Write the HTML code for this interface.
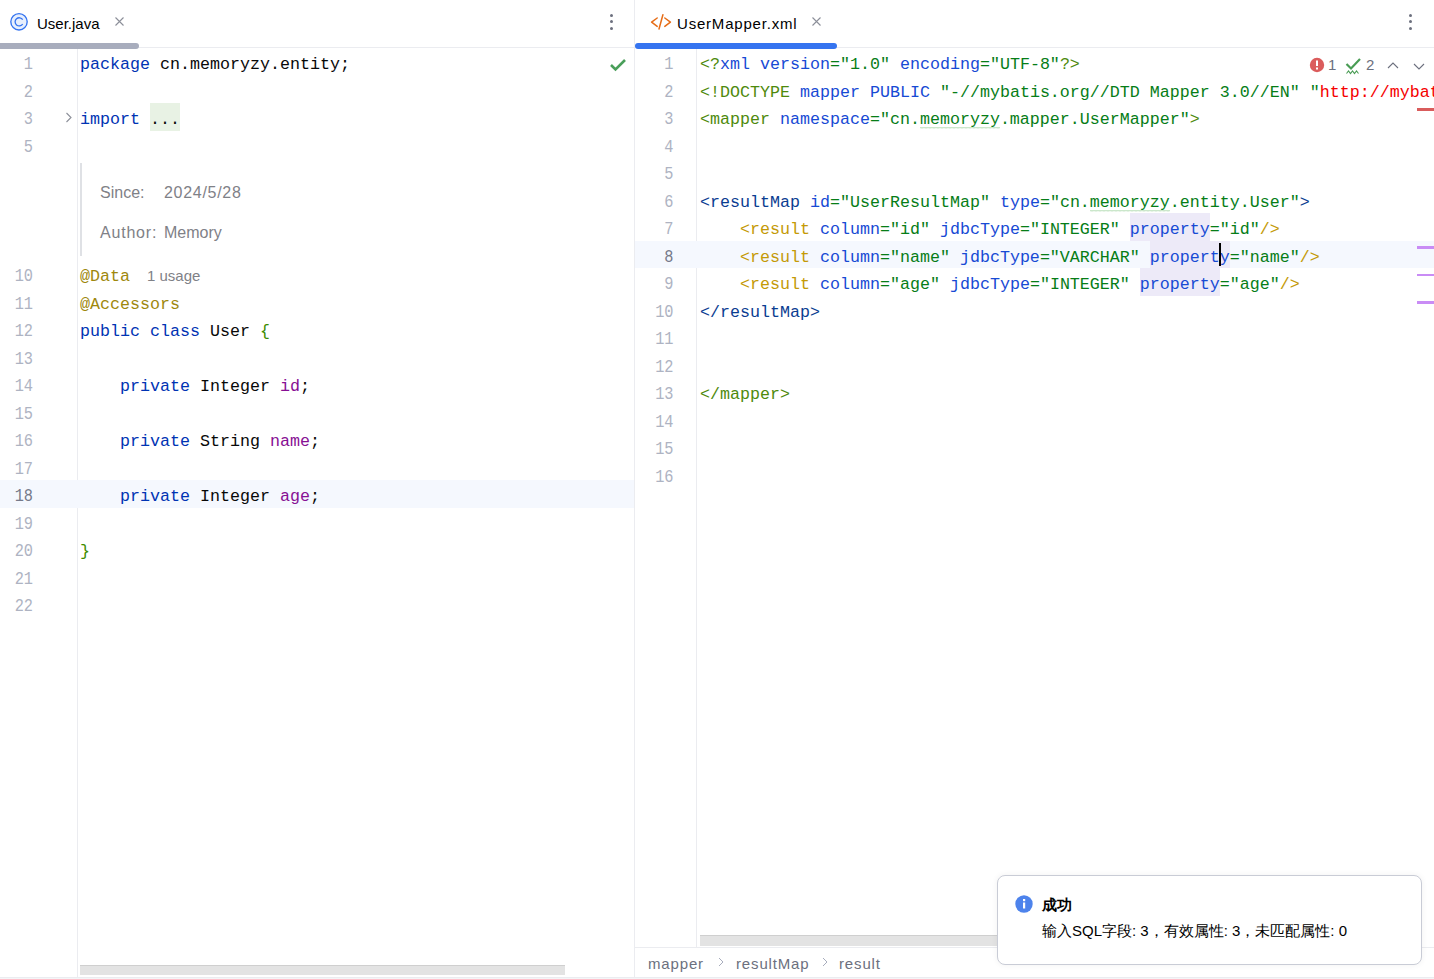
<!DOCTYPE html>
<html><head><meta charset="utf-8">
<style>
*{box-sizing:border-box}
html,body{margin:0;padding:0}
body{width:1434px;height:979px;overflow:hidden;background:#fff;position:relative;font-family:"Liberation Sans",sans-serif;color:#000}
.a{position:absolute}
.ln{position:absolute;letter-spacing:0;transform:scaleX(0.85);transform-origin:100% 50%;font-family:"Liberation Mono",monospace;font-size:18px;line-height:27.5px;height:27.5px;color:#aeb3c2;text-align:right;white-space:pre}
.cl{position:absolute;font-family:"Liberation Mono",monospace;font-size:16.6667px;line-height:27.5px;height:27.5px;color:#080808;white-space:pre}
.kw{color:#0033b3}
.fd{color:#871094}
.an{color:#9e880d}
.br{color:#3d8c00}
.st{color:#067d17}
.at{color:#174ad4}
.t1{color:#4e8a0c}
.t2{color:#0b3d91}
.t3{color:#c49a06}
.rd{color:#f50000}
#L,#R{position:absolute;left:0;top:3px}
.tabtxt{position:absolute;font-size:15px;line-height:17px;color:#000;white-space:pre}
</style></head><body>

<!-- ===== LEFT PANE ===== -->
<div class="a" style="left:0;top:47px;width:634px;height:1px;background:#ebecf0"></div>
<div class="a" style="left:0;top:43px;width:139px;height:6px;background:#a8adbd;border-radius:0 3px 3px 0"></div>
<!-- class icon -->
<svg class="a" style="left:9px;top:12px" width="20" height="20" viewBox="0 0 20 20">
  <circle cx="10" cy="9.8" r="8.2" fill="#e7effd" stroke="#3574f0" stroke-width="1.35"/>
  <path d="M13.7 7.7 A4.1 4.1 0 1 0 13.7 12" fill="none" stroke="#3574f0" stroke-width="1.3"/>
</svg>
<div class="tabtxt" style="left:37px;top:15px">User.java</div>
<svg class="a" style="left:114px;top:16px" width="11" height="11" viewBox="0 0 11 11"><path d="M1.5 1.5L9.5 9.5M9.5 1.5L1.5 9.5" stroke="#8c8f99" stroke-width="1.1"/></svg>
<!-- kebab -->
<div class="a" style="left:610px;top:14px;width:3px;height:3px;border-radius:50%;background:#6c707e"></div>
<div class="a" style="left:610px;top:20px;width:3px;height:3px;border-radius:50%;background:#6c707e"></div>
<div class="a" style="left:610px;top:27px;width:3px;height:3px;border-radius:50%;background:#6c707e"></div>
<!-- check -->
<svg class="a" style="left:609px;top:58px" width="18" height="14" viewBox="0 0 18 14"><path d="M2 7 L6.5 11.5 L16 2" fill="none" stroke="#4a9f5a" stroke-width="2.6"/></svg>

<!-- gutter border left -->
<div class="a" style="left:77px;top:49px;width:1px;height:928px;background:#ebecf0"></div>
<!-- current line 18 -->
<div class="a" style="left:0;top:480px;width:634px;height:27.5px;background:#f5f8fe"></div>

<div class="a" style="left:150px;top:103px;width:30px;height:27.5px;background:#e8f2e4"></div>
<svg class="a" style="left:64px;top:111px" width="10" height="13" viewBox="0 0 10 13"><path d="M2.5 2 L7 6.5 L2.5 11" fill="none" stroke="#8c8f99" stroke-width="1.1"/></svg>
<div id="L">
<div class="ln" style="left:0;width:33px;top:48px">1</div>
<div class="ln" style="left:0;width:33px;top:75.5px">2</div>
<div class="ln" style="left:0;width:33px;top:103px">3</div>
<div class="ln" style="left:0;width:33px;top:130.5px">5</div>
<div class="ln" style="left:0;width:33px;top:260px">10</div>
<div class="ln" style="left:0;width:33px;top:287.5px">11</div>
<div class="ln" style="left:0;width:33px;top:315px">12</div>
<div class="ln" style="left:0;width:33px;top:342.5px">13</div>
<div class="ln" style="left:0;width:33px;top:370px">14</div>
<div class="ln" style="left:0;width:33px;top:397.5px">15</div>
<div class="ln" style="left:0;width:33px;top:425px">16</div>
<div class="ln" style="left:0;width:33px;top:452.5px">17</div>
<div class="ln" style="left:0;width:33px;top:480px;color:#767a8a">18</div>
<div class="ln" style="left:0;width:33px;top:507.5px">19</div>
<div class="ln" style="left:0;width:33px;top:535px">20</div>
<div class="ln" style="left:0;width:33px;top:562.5px">21</div>
<div class="ln" style="left:0;width:33px;top:590px">22</div>


<div class="cl" style="left:80px;top:48px"><span class="kw">package</span> cn.memoryzy.entity;</div>
<div class="cl" style="left:80px;top:103px"><span class="kw">import</span> ...</div>
<div class="cl" style="left:80px;top:260px"><span class="an">@Data</span></div>
<div class="cl" style="left:80px;top:287.5px"><span class="an">@Accessors</span></div>
<div class="cl" style="left:80px;top:315px"><span class="kw">public class</span> User <span class="br">{</span></div>
<div class="cl" style="left:80px;top:370px">    <span class="kw">private</span> Integer <span class="fd">id</span>;</div>
<div class="cl" style="left:80px;top:425px">    <span class="kw">private</span> String <span class="fd">name</span>;</div>
<div class="cl" style="left:80px;top:480px">    <span class="kw">private</span> Integer <span class="fd">age</span>;</div>
<div class="cl" style="left:80px;top:535px"><span class="br">}</span></div>
</div>

<!-- doc block -->
<div class="a" style="left:80px;top:163px;width:2px;height:93px;background:#dfe1e5"></div>
<div class="a" style="left:100px;top:182.5px;font-size:16px;line-height:19px;color:#7f8187;white-space:pre">Since:</div>
<div class="a" style="left:164px;top:182.5px;letter-spacing:0.7px;font-size:16px;line-height:19px;color:#7f8187;white-space:pre">2024/5/28</div>
<div class="a" style="left:100px;top:222.5px;letter-spacing:0.8px;font-size:16px;line-height:19px;color:#7f8187;white-space:pre">Author:</div>
<div class="a" style="left:164px;top:222.5px;font-size:16px;line-height:19px;color:#7f8187;white-space:pre">Memory</div>
<div class="a" style="left:147px;top:267px;font-size:15px;line-height:17px;color:#7f8187;white-space:pre">1 usage</div>

<!-- left scrollbar -->
<div class="a" style="left:80px;top:965px;width:485px;height:10px;background:#e3e3e3;border-top:1px solid #cfcfcf"></div>

<!-- ===== DIVIDER ===== -->
<div class="a" style="left:634px;top:0;width:1px;height:979px;background:#ebecf0"></div>

<!-- ===== RIGHT PANE ===== -->
<div class="a" style="left:635px;top:47px;width:799px;height:1px;background:#ebecf0"></div>
<div class="a" style="left:635px;top:43px;width:202px;height:6px;background:#3574f0;border-radius:3px"></div>
<svg class="a" style="left:650px;top:13px" width="22" height="18" viewBox="0 0 22 18">
  <path d="M7.2 5 L1.6 9.2 L7.2 13.4 M14.8 5 L20.4 9.2 L14.8 13.4 M12.9 1.8 L9 16" fill="none" stroke="#e66d17" stroke-width="1.5" stroke-linecap="round" stroke-linejoin="round"/>
</svg>
<div class="tabtxt" style="left:677px;top:15px;letter-spacing:0.8px">UserMapper.xml</div>
<svg class="a" style="left:811px;top:16px" width="11" height="11" viewBox="0 0 11 11"><path d="M1.5 1.5L9.5 9.5M9.5 1.5L1.5 9.5" stroke="#8c8f99" stroke-width="1.1"/></svg>
<div class="a" style="left:1409px;top:14px;width:3px;height:3px;border-radius:50%;background:#6c707e"></div>
<div class="a" style="left:1409px;top:20px;width:3px;height:3px;border-radius:50%;background:#6c707e"></div>
<div class="a" style="left:1409px;top:27px;width:3px;height:3px;border-radius:50%;background:#6c707e"></div>

<div class="a" style="left:696px;top:49px;width:1px;height:898px;background:#ebecf0"></div>
<div class="a" style="left:635px;top:240.5px;width:799px;height:27.5px;background:#f5f8fe"></div>

<!-- property highlights -->
<div class="a" style="left:1130px;top:213px;width:80px;height:27.5px;background:#edeaf8"></div>
<div class="a" style="left:1150px;top:240.5px;width:80px;height:27.5px;background:#edeaf8"></div>
<div class="a" style="left:1140px;top:268px;width:80px;height:27.5px;background:#edeaf8"></div>

<div id="R">
<div class="ln" style="left:635px;width:38.5px;top:48px">1</div>
<div class="ln" style="left:635px;width:38.5px;top:75.5px">2</div>
<div class="ln" style="left:635px;width:38.5px;top:103px">3</div>
<div class="ln" style="left:635px;width:38.5px;top:130.5px">4</div>
<div class="ln" style="left:635px;width:38.5px;top:158px">5</div>
<div class="ln" style="left:635px;width:38.5px;top:185.5px">6</div>
<div class="ln" style="left:635px;width:38.5px;top:213px">7</div>
<div class="ln" style="left:635px;width:38.5px;top:240.5px;color:#767a8a">8</div>
<div class="ln" style="left:635px;width:38.5px;top:268px">9</div>
<div class="ln" style="left:635px;width:38.5px;top:295.5px">10</div>
<div class="ln" style="left:635px;width:38.5px;top:323px">11</div>
<div class="ln" style="left:635px;width:38.5px;top:350.5px">12</div>
<div class="ln" style="left:635px;width:38.5px;top:378px">13</div>
<div class="ln" style="left:635px;width:38.5px;top:405.5px">14</div>
<div class="ln" style="left:635px;width:38.5px;top:433px">15</div>
<div class="ln" style="left:635px;width:38.5px;top:460.5px">16</div>

<div class="cl" style="left:700px;top:48px"><span class="t1">&lt;?</span><span class="at">xml version</span><span class="st">="1.0"</span> <span class="at">encoding</span><span class="st">="UTF-8"</span><span class="t1">?&gt;</span></div>
<div class="cl" style="left:700px;top:75.5px"><span class="t1">&lt;!DOCTYPE</span> <span class="at">mapper PUBLIC</span> <span class="st">"-//mybatis.org//DTD Mapper 3.0//EN" "</span><span class="rd">http://mybatis</span></div>
<div class="cl" style="left:700px;top:103px"><span class="t1">&lt;mapper</span> <span class="at">namespace</span><span class="st">="cn.memoryzy.mapper.UserMapper"</span><span class="t1">&gt;</span></div>
<div class="cl" style="left:700px;top:185.5px"><span class="t2">&lt;resultMap</span> <span class="at">id</span><span class="st">="UserResultMap"</span> <span class="at">type</span><span class="st">="cn.memoryzy.entity.User"</span><span class="t2">&gt;</span></div>
<div class="cl" style="left:700px;top:213px">    <span class="t3">&lt;result</span> <span class="at">column</span><span class="st">="id"</span> <span class="at">jdbcType</span><span class="st">="INTEGER"</span> <span class="at">property</span><span class="st">="id"</span><span class="t3">/&gt;</span></div>
<div class="cl" style="left:700px;top:240.5px">    <span class="t3">&lt;result</span> <span class="at">column</span><span class="st">="name"</span> <span class="at">jdbcType</span><span class="st">="VARCHAR"</span> <span class="at">property</span><span class="st">="name"</span><span class="t3">/&gt;</span></div>
<div class="cl" style="left:700px;top:268px">    <span class="t3">&lt;result</span> <span class="at">column</span><span class="st">="age"</span> <span class="at">jdbcType</span><span class="st">="INTEGER"</span> <span class="at">property</span><span class="st">="age"</span><span class="t3">/&gt;</span></div>
<div class="cl" style="left:700px;top:295.5px"><span class="t2">&lt;/resultMap&gt;</span></div>
<div class="cl" style="left:700px;top:378px"><span class="t1">&lt;/mapper&gt;</span></div>
</div>

<svg class="a" style="left:920px;top:126px" width="80" height="3"><pattern id="wv" width="4" height="3" patternUnits="userSpaceOnUse"><path d="M0 2.5 L1 1 L2 2.5 L3 1 L4 2.5" fill="none" stroke="#b5dcb5" stroke-width="0.8"/></pattern><rect width="80" height="3" fill="url(#wv)"/></svg>
<svg class="a" style="left:1090px;top:208.5px" width="80" height="3"><rect width="80" height="3" fill="url(#wv)"/></svg>
<!-- cursor -->
<div class="a" style="left:1219px;top:243px;width:2px;height:23px;background:#000"></div>

<!-- mask right overflow beyond 1434 is natural -->

<!-- inspection widget -->
<svg class="a" style="left:1308px;top:56px" width="18" height="18" viewBox="0 0 18 18"><circle cx="9" cy="9" r="7.2" fill="#db5c5c"/><rect x="8" y="4.5" width="2" height="5.5" fill="#fff"/><rect x="8" y="11.5" width="2" height="2" fill="#fff"/></svg>
<div class="a" style="left:1328px;top:56px;font-size:15px;line-height:17px;color:#6c707e">1</div>
<svg class="a" style="left:1344px;top:56px" width="20" height="20" viewBox="0 0 20 20"><path d="M2.5 8 L7 12.5 L16 3" fill="none" stroke="#499c54" stroke-width="2.2"/><path d="M2.5 17.5 L4.5 15 L6.5 17.5 L8.5 15 L10.5 17.5 L12.5 15 L14.5 17.5" fill="none" stroke="#499c54" stroke-width="1.1"/></svg>
<div class="a" style="left:1366px;top:56px;font-size:15px;line-height:17px;color:#6c707e">2</div>
<svg class="a" style="left:1386px;top:59.5px" width="14" height="12" viewBox="0 0 14 12"><path d="M2 8 L7 3 L12 8" fill="none" stroke="#6c707e" stroke-width="1.1"/></svg>
<svg class="a" style="left:1412px;top:59.5px" width="14" height="12" viewBox="0 0 14 12"><path d="M2 4 L7 9 L12 4" fill="none" stroke="#6c707e" stroke-width="1.1"/></svg>

<!-- right markers -->
<div class="a" style="left:1417px;top:108px;width:17px;height:3px;background:#d95c5c"></div>
<div class="a" style="left:1417px;top:246px;width:17px;height:2.5px;background:#c98cf5"></div>
<div class="a" style="left:1417px;top:273.5px;width:17px;height:2.5px;background:#c98cf5"></div>
<div class="a" style="left:1417px;top:301px;width:17px;height:2.5px;background:#c98cf5"></div>

<!-- right scrollbar -->
<div class="a" style="left:700px;top:935px;width:320px;height:11px;background:#e3e3e3;border-top:1px solid #cfcfcf"></div>

<!-- breadcrumb -->
<div class="a" style="left:635px;top:947px;width:799px;height:1px;background:#ebecf0"></div>
<div class="a" style="left:648px;top:955px;font-size:15px;letter-spacing:0.85px;line-height:17px;color:#6c707e;white-space:pre">mapper</div>
<svg class="a" style="left:716px;top:956px" width="10" height="12" viewBox="0 0 10 12"><path d="M3 2 L7 6 L3 10" fill="none" stroke="#a8adbd" stroke-width="1"/></svg>
<div class="a" style="left:736px;top:955px;font-size:15px;letter-spacing:0.85px;line-height:17px;color:#6c707e;white-space:pre">resultMap</div>
<svg class="a" style="left:820px;top:956px" width="10" height="12" viewBox="0 0 10 12"><path d="M3 2 L7 6 L3 10" fill="none" stroke="#a8adbd" stroke-width="1"/></svg>
<div class="a" style="left:839px;top:955px;font-size:15px;letter-spacing:0.85px;line-height:17px;color:#6c707e;white-space:pre">result</div>

<!-- bottom border -->
<div class="a" style="left:0;top:977px;width:1434px;height:1px;background:#ebecf0"></div><div class="a" style="left:0;top:978px;width:1434px;height:1px;background:#f4f5f7"></div>

<!-- notification -->
<div class="a" style="left:997px;top:875px;width:425px;height:90px;background:#fff;border:1px solid #c9ccd6;border-radius:8px;box-shadow:0 0 6px rgba(0,0,0,0.06)"></div>
<svg class="a" style="left:1015px;top:895px" width="18" height="18" viewBox="0 0 18 18"><circle cx="9" cy="9" r="8.7" fill="#4d83ec"/><rect x="8" y="4" width="2.2" height="2.2" fill="#fff"/><rect x="8" y="7.5" width="2.2" height="6" fill="#fff"/></svg>
<div class="a" style="left:1042px;top:896px;font-size:15px;line-height:17px;font-weight:bold;color:#000;white-space:pre">成功</div>
<div class="a" style="left:1042px;top:922px;font-size:15px;line-height:17px;color:#000;white-space:pre">输入SQL字段: 3，有效属性: 3，未匹配属性: 0</div>

</body></html>
